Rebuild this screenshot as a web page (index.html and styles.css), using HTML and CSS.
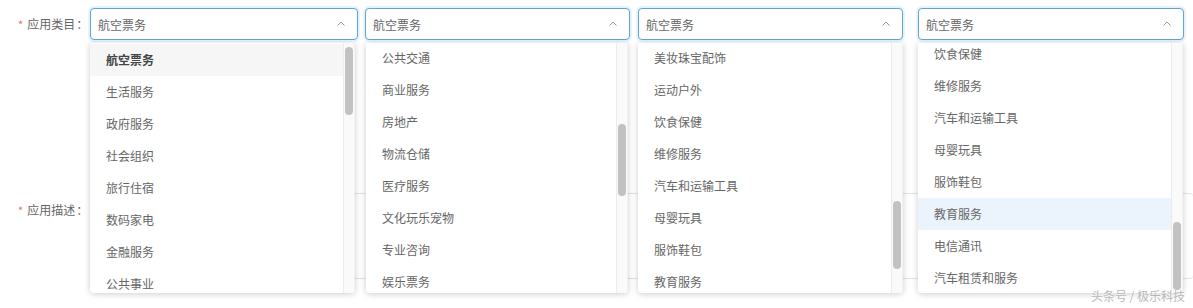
FILE: index.html
```html
<!DOCTYPE html>
<html lang="zh-CN">
<head>
<meta charset="utf-8">
<title>应用类目</title>
<link rel="stylesheet" href="styles.css">
</head>
<body>
<div class="form">
  <div class="row row-cat">
    <label class="label"><span class="req">*</span>应用类目<span class="colon">：</span></label>
    <div class="selects">
      <div class="col c1">
        <div class="select"><span class="value">航空票务</span><svg class="arrow" width="8" height="5" viewBox="0 0 8 5"><path d="M0.5 4.5 L4 1 L7.5 4.5" fill="none" stroke="#999" stroke-width="1"/></svg></div>
        <div class="dropdown">
          <ul class="list" style="margin-top:1px">
            <li class="selected">航空票务</li>
            <li>生活服务</li>
            <li>政府服务</li>
            <li>社会组织</li>
            <li>旅行住宿</li>
            <li>数码家电</li>
            <li>金融服务</li>
            <li>公共事业</li>
          </ul>
          <div class="track"><div class="thumb" style="margin-top:4px;height:68px"></div></div>
        </div>
      </div>
      <div class="col c2">
        <div class="select"><span class="value">航空票务</span><svg class="arrow" width="8" height="5" viewBox="0 0 8 5"><path d="M0.5 4.5 L4 1 L7.5 4.5" fill="none" stroke="#999" stroke-width="1"/></svg></div>
        <div class="dropdown">
          <ul class="list" style="margin-top:-1px">
            <li>公共交通</li>
            <li>商业服务</li>
            <li>房地产</li>
            <li>物流仓储</li>
            <li>医疗服务</li>
            <li>文化玩乐宠物</li>
            <li>专业咨询</li>
            <li>娱乐票务</li>
          </ul>
          <div class="track"><div class="thumb" style="margin-top:81px;height:72px"></div></div>
        </div>
      </div>
      <div class="col c3">
        <div class="select"><span class="value">航空票务</span><svg class="arrow" width="8" height="5" viewBox="0 0 8 5"><path d="M0.5 4.5 L4 1 L7.5 4.5" fill="none" stroke="#999" stroke-width="1"/></svg></div>
        <div class="dropdown">
          <ul class="list" style="margin-top:-1px">
            <li>美妆珠宝配饰</li>
            <li>运动户外</li>
            <li>饮食保健</li>
            <li>维修服务</li>
            <li>汽车和运输工具</li>
            <li>母婴玩具</li>
            <li>服饰鞋包</li>
            <li>教育服务</li>
          </ul>
          <div class="track"><div class="thumb" style="margin-top:158px;height:68px"></div></div>
        </div>
      </div>
      <div class="col c4">
        <div class="select"><span class="value">航空票务</span><svg class="arrow" width="8" height="5" viewBox="0 0 8 5"><path d="M0.5 4.5 L4 1 L7.5 4.5" fill="none" stroke="#999" stroke-width="1"/></svg></div>
        <div class="dropdown">
          <ul class="list" style="margin-top:-5px">
            <li>饮食保健</li>
            <li>维修服务</li>
            <li>汽车和运输工具</li>
            <li>母婴玩具</li>
            <li>服饰鞋包</li>
            <li class="hover">教育服务</li>
            <li>电信通讯</li>
            <li>汽车租赁和服务</li>
          </ul>
          <div class="track"><div class="thumb" style="margin-top:179px;height:68px"></div></div>
        </div>
      </div>
    </div>
  </div>
  <div class="row row-desc">
    <label class="label"><span class="req">*</span>应用描述<span class="colon">：</span></label>
    <div class="desc">
      <div class="textarea"></div>
    </div>
  </div>
</div>
<div class="watermark">头条号 / 极乐科技</div>
</body>
</html>
```
FILE: styles.css
```css
* { box-sizing: border-box; }
html, body { margin: 0; padding: 0; }
body {
  width: 1193px;
  height: 308px;
  overflow: hidden;
  background: #fff;
  font-family: "Noto Sans CJK SC", "Noto Sans", sans-serif;
  font-size: 12px;
  color: #666;
  position: relative;
}
.form { padding-top: 8px; }
.row { display: flex; }
.label {
  width: 90px;
  padding-left: 18px;
  color: #666;
  font-size: 12px;
  line-height: 32px;
  white-space: nowrap;
  align-self: flex-start;
}
.req { color: #ef6a5a; font-size: 11px; margin-right: 4px; }
.colon { margin-left: 1px; }
.selects { display: flex; }
.col { position: relative; }
.c1 { width: 268px; }
.c2 { width: 265px; margin-left: 7px; }
.c3 { width: 265px; margin-left: 8px; }
.c4 { width: 266px; margin-left: 15px; }
.select {
  height: 32px;
  border: 1px solid #5ea6d6;
  border-radius: 4px;
  box-shadow: 0 0 0 2px rgba(94, 166, 214, 0.15);
  background: #fff;
  display: flex;
  align-items: center;
  justify-content: space-between;
  padding: 0 12px 0 7px;
}
.value { color: #666; line-height: 30px; margin-top: 1px; }
.arrow { display: block; margin-top: -1px; }
.dropdown {
  position: absolute;
  top: 35px;
  left: 0;
  right: 0;
  height: 250px;
  background: #fff;
  border-radius: 0 0 4px 4px;
  box-shadow: 0 1px 6px rgba(0, 0, 0, 0.2);
  display: flex;
  overflow: hidden;
  z-index: 5;
}
.c1 .dropdown { right: 3px; }
.c2 .dropdown { left: 1px; right: 2px; }
.c4 .dropdown { right: 1px; }
.list {
  flex: 1;
  list-style: none;
  margin: 0;
  padding: 0;
  align-self: flex-start;
}
.list li {
  height: 32px;
  line-height: 32px;
  padding-left: 16px;
  color: #666;
  white-space: nowrap;
}
.list li.selected { background: #f6f6f6; color: #444; font-weight: bold; }
.list li.hover { background: #ebf4fc; }
.track {
  width: 12px;
  flex: none;
  background: #fafafa;
  border-left: 1px solid #ececec;
  border-right: 1px solid #f2f2f2;
  padding: 0 1px;
}
.thumb {
  width: 8px;
  background: #c2c2c2;
  border-radius: 4px;
}
.row-desc { margin-top: 153px; }
.row-desc .label { margin-top: 1px; }
.desc { flex: 1; }
.textarea {
  height: 86px;
  border: 1px solid #e2e2e2;
  border-radius: 4px;
  border-right: none;
}
.watermark {
  position: absolute;
  right: 8px;
  bottom: 4px;
  color: #b8b8b8;
  font-size: 12px;
  line-height: 16px;
  z-index: 10;
  text-shadow: 0 0 2px #fff;
}
```
